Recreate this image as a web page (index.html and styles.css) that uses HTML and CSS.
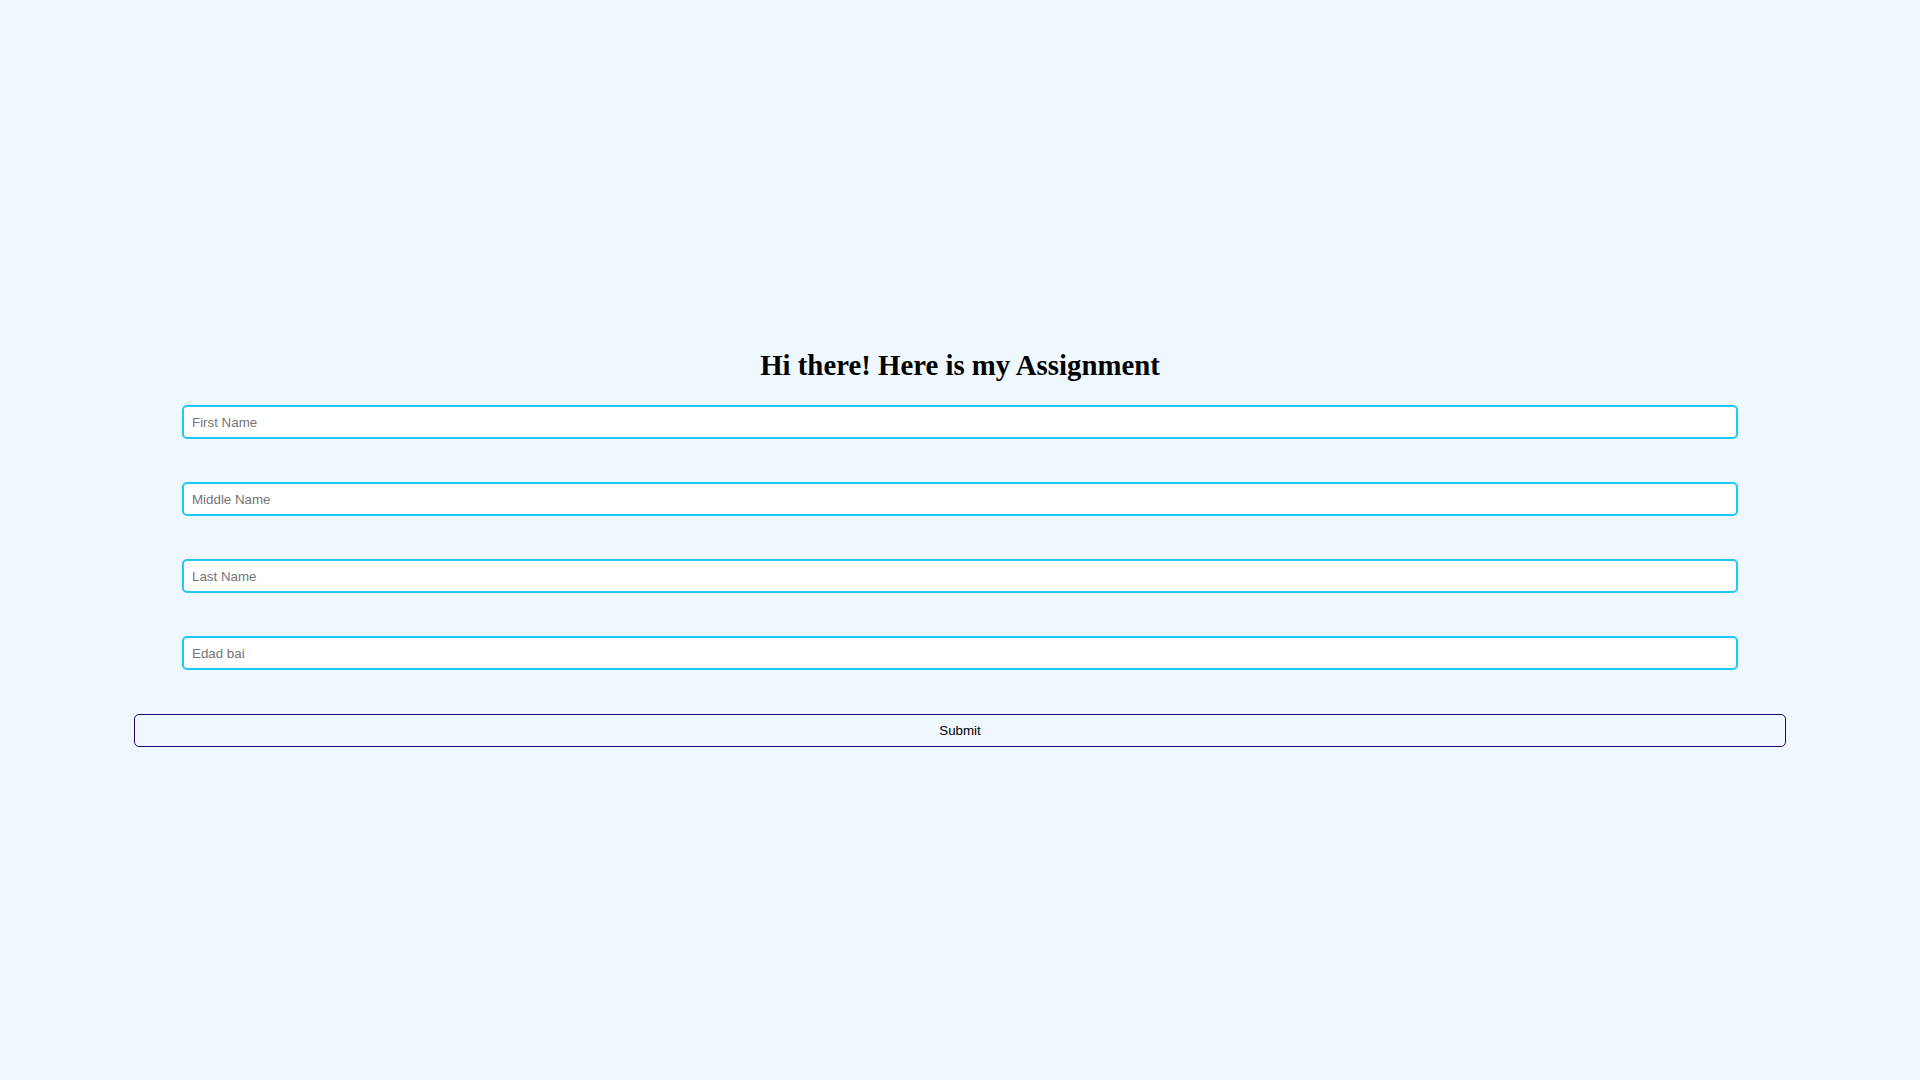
FILE: index.html
```html
<!DOCTYPE html>
<html lang="en">
<head>
<meta charset="utf-8">
<title>Assignment</title>
<link rel="stylesheet" href="styles.css">
</head>
<body>
<main class="page">
  <h1 class="title">Hi there! Here is my Assignment</h1>
  <form class="form">
    <input class="field" type="text" placeholder="First Name">
    <input class="field" type="text" placeholder="Middle Name">
    <input class="field" type="text" placeholder="Last Name">
    <input class="field" type="text" placeholder="Edad bai">
    <button class="submit" type="button">Submit</button>
  </form>
</main>
</body>
</html>
```

FILE: styles.css
```css
html, body {
  margin: 0;
  padding: 0;
  background: #f0f8ff;
}

.page {
  padding-top: 349px;
  display: flex;
  flex-direction: column;
  align-items: center;
}

.title {
  margin: 0 0 23px;
  font-family: "Liberation Serif", "Times New Roman", serif;
  font-weight: bold;
  font-size: 28.8px;
  line-height: normal;
  color: #000;
}

.form {
  width: 100%;
  display: flex;
  flex-direction: column;
  align-items: center;
  gap: 43px;
}

.field {
  box-sizing: border-box;
  width: 1556px;
  height: 34px;
  margin: 0;
  padding: 0 8px;
  border: 2px solid #1ec8f8;
  border-radius: 5px;
  background: #fff;
  font-family: "Liberation Sans", Arial, sans-serif;
  font-size: 13.33px;
  color: #000;
  outline: none;
}

.field::placeholder {
  color: #757575;
}

.submit {
  box-sizing: border-box;
  width: 1652px;
  height: 33px;
  margin: 1px 0 0;
  padding: 0;
  border: 1px solid #24067e;
  border-radius: 5px;
  background: #f0f8ff;
  font-family: "Liberation Sans", Arial, sans-serif;
  font-size: 13.33px;
  color: #000;
  cursor: pointer;
}
```
